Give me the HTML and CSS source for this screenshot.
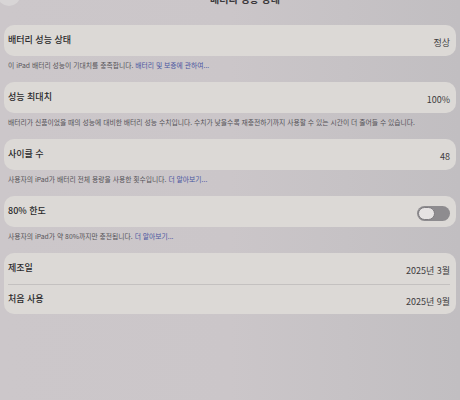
FILE: index.html
```html
<!DOCTYPE html>
<html lang="ko">
<head>
<meta charset="utf-8">
<link rel="stylesheet" href="styles.css">
</head>
<body>
<div class="screen">
  <header class="topbar">
    <span class="back"></span>
    <span class="title">배터리 성능 상태</span>
  </header>

  <section class="card">
    <div class="row"><span class="label">배터리 성능 상태</span><span class="value">정상</span></div>
  </section>
  <p class="note">이 iPad 배터리 성능이 기대치를 충족합니다. <span class="link">배터리 및 보증에 관하여...</span></p>

  <section class="card">
    <div class="row"><span class="label">성능 최대치</span><span class="value">100%</span></div>
  </section>
  <p class="note">배터리가 신품이었을 때의 성능에 대비한 배터리 성능 수치입니다. 수치가 낮을수록 재충전하기까지 사용할 수 있는 시간이 더 줄어들 수 있습니다.</p>

  <section class="card">
    <div class="row"><span class="label">사이클 수</span><span class="value">48</span></div>
  </section>
  <p class="note">사용자의 iPad가 배터리 전체 용량을 사용한 횟수입니다. <span class="link">더 알아보기...</span></p>

  <section class="card">
    <div class="row"><span class="label">80% 한도</span><span class="toggle"><span class="knob"></span></span></div>
  </section>
  <p class="note">사용자의 iPad가 약 80%까지만 충전됩니다. <span class="link">더 알아보기...</span></p>

  <section class="card">
    <div class="row"><span class="label">제조일</span><span class="value">2025년 3월</span></div>
    <div class="row divided"><span class="label">처음 사용</span><span class="value">2025년 9월</span></div>
  </section>
</div>
</body>
</html>
```

FILE: styles.css
```css
html, body {
  margin: 0;
  padding: 0;
}
body {
  width: 460px;
  height: 400px;
  overflow: hidden;
  background: linear-gradient(90deg, #ccc7ca 0%, #cbc6c9 50%, #c1bec1 100%);
  font-family: "Noto Sans CJK KR", "Noto Sans", sans-serif;
  color: #2b2a2c;
}
.screen {
  padding: 0 4px;
}
.topbar {
  position: relative;
  display: flow-root;
  height: 25px;
  text-align: center;
}
.title {
  display: block;
  margin-top: -7px;
  padding-left: 30px;
  font-size: 10px;
  line-height: 12px;
  font-weight: 700;
  color: #3a383b;
}
.back {
  position: absolute;
  left: -6px;
  top: -14px;
  width: 22px;
  height: 20px;
  border-radius: 50%;
  background: #d8d5d6;
}
.card {
  background: #dcd9d6;
  border-radius: 10px;
  padding: 0 6px 0 4px;
}
.row {
  height: 31px;
  display: flex;
  align-items: center;
  justify-content: space-between;
}
.row.divided {
  height: 29px;
  border-top: 1px solid #c4c1c0;
}
.label {
  font-size: 9px;
  font-weight: 500;
  color: #2a292b;
  margin-top: -3px;
}
.value {
  font-size: 9px;
  color: #3c3b3d;
  margin-top: 4px;
}
.note {
  margin: 0;
  height: 26px;
  box-sizing: border-box;
  padding: 5px 0 0 4px;
  font-size: 6.8px;
  line-height: 9px;
  color: #555358;
  white-space: nowrap;
}
.link {
  color: #4a55a0;
}
.toggle {
  width: 33px;
  height: 15px;
  border-radius: 8px;
  background: #8e8c8f;
  display: flex;
  align-items: center;
  padding: 0 1px;
  box-sizing: border-box;
  margin-top: 3px;
}
.knob {
  width: 17px;
  height: 13px;
  border-radius: 7px;
  background: #e6e3e3;
  border: 0.5px solid #7e7c80;
  box-sizing: border-box;
}
```
